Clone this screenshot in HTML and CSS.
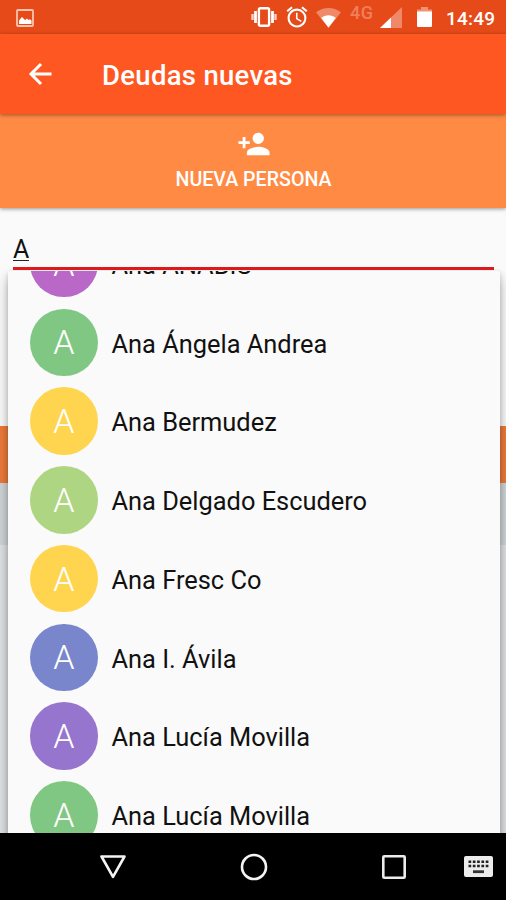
FILE: index.html
```html
<!DOCTYPE html>
<html lang="es">
<head>
<meta charset="utf-8">
<title>Deudas nuevas</title>
<link rel="stylesheet" href="styles.css">
</head>
<body>
<div class="screen">
  <div class="status">
    <svg class="picture" width="18" height="18" viewBox="0 0 18 18"><rect x="1" y="1" width="16" height="16" rx="1" fill="none" stroke="#ffc4b0" stroke-width="1.800"/><path d="M3 15V11.500L6 8l3 3 2-1.500 1.500 1.500 1.500-.8 1.500 1.300V15z" fill="#fff"/></svg>
    <div class="status-right">
      <svg class="vibrate" width="28" height="20" viewBox="0 0 28 20" fill="none" stroke="#fff"><rect x="8.900" y="1.200" width="10.200" height="17.600" rx="1.500" stroke-width="2.400"/><path d="M5.500 4v12M22.500 4v12" stroke-width="2.800"/><path d="M2.500 7v6M25.500 7v6" stroke="#ffd2c2" stroke-width="2.400"/></svg>
      <svg class="alarm" width="22" height="22" viewBox="1.500 1.500 21 21" fill="#fff"><path d="M22 5.720l-4.600-3.860-1.290 1.530 4.600 3.860L22 5.720zM7.880 3.390L6.600 1.860 2 5.710l1.290 1.530 4.590-3.850zM12.500 8H11v6l4.750 2.850.75-1.230-4-2.370V8zM12 4c-4.970 0-9 4.030-9 9s4.020 9 9 9a9 9 0 0 0 0-18zm0 16c-3.870 0-7-3.130-7-7s3.130-7 7-7 7 3.130 7 7-3.130 7-7 7z"/></svg>
      <svg class="wifi" width="25" height="20" viewBox="0 0 25 20"><path d="M12.500 20L0 4.300C7.500-1.400 17.500-1.400 25 4.300z" fill="#fff" fill-opacity=".35"/><path d="M12.500 19.500L5.200 10C9.500 6.300 15.500 6.300 19.800 10z" fill="#fff"/></svg>
      <span class="net">4G</span>
      <svg class="signal" width="22" height="21" viewBox="0 0 22 21"><path d="M0 21L22 0v21z" fill="#fff" fill-opacity=".35"/><path d="M0 21L11 10.500V21z" fill="#fff"/></svg>
      <svg class="battery" width="15" height="20" viewBox="0 0 15 20"><path d="M4 0h7v2.500h4V6H0V2.500h4z" fill="#fff" fill-opacity=".4"/><path d="M0 4.500h15V19a1 1 0 0 1-1 1H1a1 1 0 0 1-1-1z" fill="#fff"/></svg>
      <span class="clock">14:49</span>
    </div>
  </div>
  <header class="toolbar">
    <svg width="24" height="24" viewBox="0 0 24 24" fill="none" stroke="#fff" stroke-width="3"><path d="M23.500 12H3M13 2L3 12l10 10"/></svg>
    <h1>Deudas nuevas</h1>
  </header>
  <button class="new-person">
    <svg width="34" height="34" viewBox="0 0 24 24" fill="#fff"><path d="M15 12c2.210 0 4-1.790 4-4s-1.790-4-4-4-4 1.790-4 4 1.790 4 4 4zm-9-2V7H4v3H1v2h3v3h2v-3h3v-2H6zm9 4c-2.670 0-8 1.340-8 4v2h16v-2c0-2.660-5.330-4-8-4z"/></svg>
    <span>NUEVA PERSONA</span>
  </button>
  <main class="content">
    <div class="form"><div class="field"><span>A</span></div></div>
    <div class="accent"></div>
    <div class="band"></div>
    <div class="rest"></div>
    <div class="popup">
      <ul class="people">
        <li><i class="avatar purple">A</i><span>Ana ANABIS</span></li>
        <li><i class="avatar green">A</i><span>Ana Ángela Andrea</span></li>
        <li><i class="avatar yellow">A</i><span>Ana Bermudez</span></li>
        <li><i class="avatar lime">A</i><span>Ana Delgado Escudero</span></li>
        <li><i class="avatar yellow">A</i><span>Ana Fresc Co</span></li>
        <li><i class="avatar indigo">A</i><span>Ana I. Ávila</span></li>
        <li><i class="avatar violet">A</i><span>Ana Lucía Movilla</span></li>
        <li><i class="avatar green">A</i><span>Ana Lucía Movilla</span></li>
      </ul>
    </div>
  </main>
  <nav class="navbar">
    <svg class="back" width="26" height="24" viewBox="0 0 26 24" fill="none" stroke="#f4f4f4" stroke-width="2.600" stroke-linejoin="round"><path d="M1.500 1.500h23L13 21.800z"/></svg>
    <svg class="home" width="28" height="28" viewBox="0 0 28 28" fill="none" stroke="#f4f4f4" stroke-width="2.600"><circle cx="14" cy="14" r="12"/></svg>
    <svg class="recent" width="26" height="26" viewBox="0 0 26 26" fill="none" stroke="#ececec" stroke-width="2.600"><rect x="2.300" y="2.300" width="21.400" height="21.400" rx="1"/></svg>
    <svg class="keyboard" width="29" height="21" viewBox="0 0 29 21"><rect width="29" height="21" rx="2" fill="#ececec"/><path d="M4.500 5.700h20M4.500 10h20" stroke="#222" stroke-width="2.600" stroke-dasharray="2.700 1.600"/><path d="M9 15.700h11" stroke="#333" stroke-width="2.800"/></svg>
  </nav>
</div>
</body>
</html>
```
FILE: styles.css
```css
* { box-sizing: border-box; }
body { margin: 0; font-family: Roboto, "Liberation Sans", sans-serif; }
svg { display: block; flex: none; }
.screen { width: 506px; height: 900px; display: flex; flex-direction: column; overflow: hidden; background: #fafafa; }

.status { height: 34px; flex: none; background: #e64a19; display: flex; justify-content: space-between; padding: 0 11px 0 16px; }
.picture { margin-top: 9px; }
.status-right { display: flex; color: #fff; }
.vibrate { margin-top: 7px; margin-left: 2px; margin-right: 8px; }
.alarm { margin-top: 6px; margin-right: 8px; }
.wifi { margin-top: 8px; margin-right: 9px; }
.net { width: 25px; margin-right: 5px; padding-top: 3px; font-size: 18px; line-height: 20px; font-weight: 500; letter-spacing: .4px; color: #f27f5b; }
.signal { margin-top: 7px; margin-right: 15px; }
.battery { margin-top: 7px; margin-right: 14px; }
.clock { width: 49px; font-size: 19px; line-height: 37px; font-weight: 500; letter-spacing: .2px; white-space: nowrap; }

.toolbar { height: 80px; flex: none; background: #ff5722; color: #fff; display: flex; align-items: center; padding: 0 28px; gap: 50px; position: relative; z-index: 2; box-shadow: 0 1px 4px rgba(0, 0, 0, .4); }
.toolbar h1 { margin: 0; padding-top: 3px; font-size: 27.500px; line-height: 32px; font-weight: 500; letter-spacing: .3px; }

.new-person { height: 94px; flex: none; border: 0; margin: 0; padding: 13px 0 0 1px; background: #ff8a44; color: #fff; font-family: inherit; font-size: 19.600px; line-height: 24px; font-weight: 500; display: flex; flex-direction: column; align-items: center; position: relative; z-index: 1; box-shadow: 0 1px 4px rgba(0, 0, 0, .4); }
.new-person span { margin-top: 7px; }

.content { flex: 1; min-height: 0; position: relative; overflow: hidden; display: flex; flex-direction: column; }
.form { height: 218px; flex: none; padding: 20px 12px 0 13px; }
.field { height: 42px; border-bottom: 3px solid #dc1a1c; font-size: 25px; line-height: 43px; color: #111; position: relative; z-index: 2; }
.field span { display: inline-block; height: 33px; border-bottom: 1.500px solid #222; }
.accent { height: 57px; flex: none; background: #ed7a3b; }
.band { height: 62px; flex: none; background: #cfd4d7; }
.rest { flex: 1; background: #dfe1e2; }

.popup { position: absolute; left: 7.500px; top: 63px; width: 492px; height: 700px; overflow: hidden; background: #fafafa; border-radius: 2px; box-shadow: 0 8px 14px rgba(0, 0, 0, .28), 0 2px 5px rgba(0, 0, 0, .18); }
.people { list-style: none; margin: -46.700px 0 0; padding: 0; }
.people li { height: 78.750px; display: flex; align-items: center; padding-left: 22.500px; gap: 14px; font-size: 25.400px; color: #111; white-space: nowrap; }
.people span { padding-top: 2.600px; }
.avatar { width: 67.500px; height: 67.500px; flex: none; border-radius: 50%; display: flex; align-items: center; justify-content: center; font-style: normal; font-weight: 300; font-size: 34px; color: #fff; }
.purple { background: #ba68c8; }
.green { background: #81c784; }
.yellow { background: #ffd54f; }
.lime { background: #aed581; }
.indigo { background: #7986cb; }
.violet { background: #9575cd; }

.navbar { height: 67px; flex: none; background: #000; display: flex; align-items: center; padding-left: 100px; position: relative; z-index: 3; }
.home { margin-left: 114px; }
.recent { margin-left: 113px; }
.keyboard { margin-left: 57px; }
```
